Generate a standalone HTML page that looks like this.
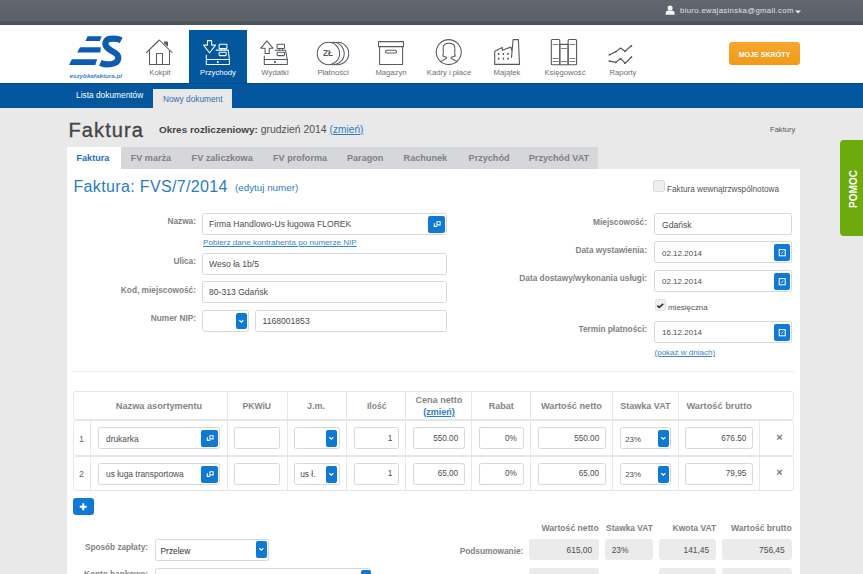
<!DOCTYPE html>
<html><head><meta charset="utf-8">
<style>
*{margin:0;padding:0;box-sizing:border-box}
html,body{width:863px;height:574px;overflow:hidden}
body{position:relative;background:#e9e9e9;font-family:"Liberation Sans",sans-serif;color:#555}
.a{position:absolute;white-space:nowrap}
#top{left:0;top:0;width:863px;height:25px;background:linear-gradient(#60676e 0%,#5a6168 82%,#4d545a 84%,#4b5258 100%)}
#hdr{left:0;top:25px;width:863px;height:58px;background:#fff}
#blue{left:0;top:83px;width:863px;height:25px;background:#02579f;border-top:1px solid #004c92}
.nt{font-size:7.7px;color:#707070;line-height:10px;text-align:center}
.lbl{font-size:8.3px;font-weight:bold;color:#828282;line-height:10px;text-align:right}
.inp{background:#fff;border:1px solid #d6d8db;border-radius:2.5px;height:22px}
.val{font-size:8.6px;color:#4d4d4d;line-height:10px}
.btn{position:absolute;background:#0e7ad4;border-radius:2px}
.th{font-size:9.2px;font-weight:bold;color:#858585;line-height:10px}
.row{border:1px solid #e6e6e6;border-radius:3px}
.vl{width:1px;background:#e8e8e8}
.sbox{background:#ebebeb;border-radius:3px;height:21px}
</style></head><body>
<div class="a" id="top"></div>
<div class="a" id="hdr"></div>
<div class="a" id="blue"></div>
<!-- top bar -->
<svg class="a" style="left:665px;top:4px" width="11" height="12" viewBox="665 4 11 12"><circle cx="670.1" cy="8.1" r="2.5" fill="#f4f4f4"/><path d="M665.7 14.8 V12.8 C665.7 11 667 10.4 670.1 10.4 C673.2 10.4 674.6 11 674.6 12.8 V14.8 Z" fill="#f4f4f4"/></svg>
<div class="a" style="left:680px;top:6px;font-size:7.7px;letter-spacing:0.36px;line-height:10px;color:#e2e2e2">biuro.ewajasinska@gmail.com</div>
<svg class="a" style="left:795px;top:10px" width="6" height="4" viewBox="0 0 6 4"><path d="M0 0.5H6L3 3.5Z" fill="#eee"/></svg>

<!-- logo -->
<svg class="a" style="left:65px;top:30px" width="62" height="52" viewBox="65 30 62 52">
<path d="M87.6 36.3 L101.7 36.3 L99.9 41 L85.4 41 Z" fill="#0c5daf"/>
<path d="M80 47.2 L100.8 47.2 L100.3 52.6 L77.2 52.6 Z" fill="#0c5daf"/>
<path d="M71.8 59.2 L97.2 59.2 L95.3 64.9 L69 64.9 Z" fill="#0c5daf"/>
<path d="M121.2 40.2 C118 38.6 113.5 38.4 110 38.9 C105.5 39.6 104.5 43.5 106.3 46.5 C108.3 49.6 113.5 51.5 116.3 53.8 C119.3 56.5 118.8 61.3 114.8 63 C110.5 64.8 104.5 64.6 100.3 62.8" fill="none" stroke="#0c5daf" stroke-width="6.2"/>
<text x="69.5" y="78" font-family="Liberation Sans" font-weight="bold" font-style="italic" font-size="5.8" fill="#3b82cc" textLength="52.5" lengthAdjust="spacingAndGlyphs">eszybkafaktura.pl</text>
</svg>

<!-- active tab -->
<div class="a" style="left:189px;top:30px;width:58px;height:53px;background:#02579f"></div>

<!-- nav icons -->
<svg class="a" style="left:0;top:25px" width="700" height="57" viewBox="0 25 700 57" fill="none" stroke-linecap="round" stroke-linejoin="round">
 <!-- house -->
 <g stroke="#585d64" stroke-width="1.05">
  <path d="M146.5 52.5 L159.3 40 L172 52.5"/>
  <path d="M149.5 50.5 V64.5 H169.5 V50.5"/>
  <path d="M156.5 64.5 V53.5 H162.5 V64.5"/>
  <path d="M164.5 42 H167.5 V45.8 L164.5 43.2 Z" fill="#585d64"/>
 </g>
 <!-- przychody (white) -->
 <g stroke="#fff" stroke-width="1.05">
  <path d="M207.5 40.6 H211.6 V45.1 H215.6 L209.5 52.8 L203.5 45.1 H207.5 Z"/>
  <rect x="219.1" y="44.3" width="7.8" height="4.3" rx="0.5"/>
  <path d="M221.3 48.6 V50 M224.7 48.6 V50" stroke-width="0.8"/>
  <path d="M216.2 50.1 H228.2 L229.4 59.5"/>
  <rect x="219.1" y="52.2" width="7.1" height="3.4" rx="0.8"/>
  <path d="M206.3 55.3 V64.5 H229.4 V59.5 H206.3"/>
  <circle cx="217.8" cy="62.1" r="0.5" fill="#fff"/>
 </g>
 <!-- wydatki -->
 <g stroke="#555a60" stroke-width="1.05">
  <path d="M265.1 53.5 V48.2 H260.9 L266.9 40.9 L273 48.2 H269.3 V53.5 Z"/>
  <rect x="277.1" y="44.3" width="7.4" height="4.2" rx="0.5"/>
  <path d="M279.3 48.5 V50 M282.6 48.5 V50" stroke-width="0.8"/>
  <path d="M275.3 50.3 H285.5 L287.3 59.5"/>
  <rect x="277.1" y="52.2" width="7.4" height="3.4" rx="0.8"/>
  <path d="M264.3 56.1 V64.5 H287.3 V59.5 H264.3"/>
  <circle cx="275" cy="62.1" r="0.5" fill="#555a60"/>
 </g>
 <!-- platnosci -->
 <g stroke="#585d64" stroke-width="1.05" fill="#fff">
  <circle cx="337.55" cy="53.45" r="11.2"/>
  <circle cx="333" cy="53.45" r="11.2"/>
  <circle cx="328.4" cy="53.45" r="11.2"/>
 </g>
 <!-- magazyn -->
 <g stroke="#585d64" stroke-width="1.05">
  <rect x="378.5" y="41.6" width="25" height="5"/>
  <path d="M379.6 46.6 V64.4 H402.6 V46.6"/>
  <rect x="385.5" y="50.2" width="11" height="2.8" rx="1.4"/>
 </g>
 <!-- kadry -->
 <g stroke="#585d64" stroke-width="1.05">
  <circle cx="448.75" cy="52.1" r="12.5"/>
  <path d="M440.4 61.6 L446.6 58.2 L446.4 57.2 L442.6 56 L443.2 54.5 V47.8 C443.2 44.6 445.2 43.3 449 43.3 C452.8 43.3 454.8 44.6 454.8 47.8 V54.5 L455.4 56 L451.3 57.2 L451.1 58.2 L457.2 61.6"/>
 </g>
 <!-- majatek -->
 <g stroke="#555a60" stroke-width="1.1">
  <path d="M494.7 64.4 V51.3 L502.3 47.4 V50.2 L510.9 47.1 L511.6 50 M511.5 57.5 L513.1 39.6 H518.4 L519.5 64.4 H494.7"/>
  <g fill="#555a60" stroke="none"><rect x="497.85" y="53" width="1.5" height="2"/><rect x="502.65" y="53" width="1.5" height="2"/><rect x="507.25" y="53" width="1.5" height="2"/><rect x="497.85" y="57.6" width="1.5" height="2"/><rect x="502.65" y="57.6" width="1.5" height="2"/><rect x="507.25" y="57.6" width="1.5" height="2"/></g>
 </g>
 <!-- ksiegowosc -->
 <g stroke="#555a60" stroke-width="1.1">
  <rect x="551.3" y="39.5" width="8.5" height="25.3" rx="1"/>
  <rect x="559.8" y="44.4" width="8.3" height="20.4"/>
  <rect x="568.1" y="39.5" width="8.5" height="25.3" rx="1"/>
  <path d="M553 44.5 H558.3 M553 58.5 H558.3 M553 61.5 H558.3 M561.5 48.5 H566.5 M561.5 61.5 H566.5 M569.8 44.5 H575 M569.8 58.5 H575 M569.8 61.5 H575" stroke-width="0.9" stroke-opacity="0.85"/>
 </g>
 <!-- raporty -->
 <g stroke="#555a60" stroke-width="1.2">
  <path d="M609.5 54.7 L616 51.6 L620.5 48 L625 51.3 L631.4 45.8"/>
  <path d="M609.5 61.2 L615.8 62.4 L620.6 58.4 L625 63.2 L631.4 57.2"/><circle cx="609.5" cy="54.7" r="0.9" fill="#555a60" stroke="none"/><circle cx="616" cy="51.6" r="0.9" fill="#555a60" stroke="none"/><circle cx="625" cy="51.3" r="0.9" fill="#555a60" stroke="none"/><circle cx="631.4" cy="45.8" r="0.9" fill="#555a60" stroke="none"/><circle cx="609.5" cy="61.2" r="0.9" fill="#555a60" stroke="none"/><circle cx="615.8" cy="62.4" r="0.9" fill="#555a60" stroke="none"/><circle cx="625" cy="63.2" r="0.9" fill="#555a60" stroke="none"/><circle cx="631.4" cy="57.2" r="0.9" fill="#555a60" stroke="none"/>
 </g>
</svg>
<div class="a" style="left:319.5px;top:50px;font-size:8.2px;font-weight:bold;color:#555a60;width:17px;text-align:center;line-height:8px">ZŁ</div>

<div class="a nt" style="left:140px;top:68px;width:40px">Kokpit</div>
<div class="a nt" style="left:188px;top:68px;width:60px;color:#fff">Przychody</div>
<div class="a nt" style="left:245px;top:68px;width:60px">Wydatki</div>
<div class="a nt" style="left:303px;top:68px;width:60px">Płatności</div>
<div class="a nt" style="left:361px;top:68px;width:60px">Magazyn</div>
<div class="a nt" style="left:419px;top:68px;width:60px">Kadry i płace</div>
<div class="a nt" style="left:477px;top:68px;width:60px">Majątek</div>
<div class="a nt" style="left:535px;top:68px;width:60px">Księgowość</div>
<div class="a nt" style="left:593px;top:68px;width:60px">Raporty</div>

<!-- moje skroty -->
<div class="a" style="left:729px;top:42px;width:71px;height:23px;border-radius:3px;background:linear-gradient(#f5a631,#f39a17);color:#fff;font-size:7.1px;font-weight:bold;line-height:26px;text-align:center">MOJE SKRÓTY</div>

<!-- blue bar -->
<div class="a" style="left:76px;top:90px;font-size:8.36px;line-height:10px;color:#fff">Lista dokumentów</div>
<div class="a" style="left:153px;top:89px;width:79px;height:19px;background:#e9e9e9"></div>
<div class="a" style="left:163px;top:93.5px;font-size:8.3px;line-height:10px;color:#2f6db3">Nowy dokument</div>

<!-- title row -->
<div class="a" style="left:68.5px;top:117px;font-size:20px;letter-spacing:1.1px;line-height:26px;color:#454545;-webkit-text-stroke:0.35px #454545">Faktura</div>
<div class="a" style="left:159px;top:125px;font-size:10.4px;line-height:10px;color:#505050"><b style="font-size:9.95px;color:#444">Okres rozliczeniowy:</b> grudzień 2014 <span style="color:#2d7cc5;text-decoration:underline;font-size:10.2px">(zmień)</span></div>
<div class="a" style="left:770px;top:125px;font-size:7.6px;line-height:10px;color:#555">Faktury</div>

<!-- POMOC -->
<div class="a" style="left:840px;top:140px;width:30px;height:96px;border-radius:4px;background:#6cab0b"></div>
<div class="a" style="left:806px;top:183px;width:96px;height:12px;transform:rotate(-90deg);color:#fff;font-size:10px;font-weight:bold;line-height:12px;text-align:center">POMOC</div>

<!-- tabs -->
<div class="a" style="left:67px;top:147px;width:531px;height:22px;background:#d5d7da"></div>
<div class="a" style="left:67px;top:147px;width:54px;height:22px;background:#fff"></div>
<div class="a" style="left:76.5px;top:153px;font-size:9.1px;font-weight:bold;line-height:10px;color:#1d6cbd">Faktura</div>
<div class="a" style="left:130.7px;top:153px;font-size:9.1px;font-weight:bold;line-height:10px;color:#808080">FV marża</div>
<div class="a" style="left:191.6px;top:153px;font-size:9.1px;font-weight:bold;line-height:10px;color:#808080">FV zaliczkowa</div>
<div class="a" style="left:273px;top:153px;font-size:9.1px;font-weight:bold;line-height:10px;color:#808080">FV proforma</div>
<div class="a" style="left:347px;top:153px;font-size:9.1px;font-weight:bold;line-height:10px;color:#808080">Paragon</div>
<div class="a" style="left:403.6px;top:153px;font-size:9.1px;font-weight:bold;line-height:10px;color:#808080">Rachunek</div>
<div class="a" style="left:468.6px;top:153px;font-size:9.1px;font-weight:bold;line-height:10px;color:#808080">Przychód</div>
<div class="a" style="left:528.8px;top:153px;font-size:9.1px;font-weight:bold;line-height:10px;color:#808080">Przychód VAT</div>

<!-- panel -->
<div class="a" style="left:67px;top:169px;width:733px;height:405px;background:#fff"></div>

<div class="a" style="left:73.5px;top:176.5px;font-size:16px;letter-spacing:0.35px;line-height:20px;color:#2c7cc4">Faktura: FVS/7/2014</div>
<div class="a" style="left:235px;top:182.5px;font-size:9.8px;line-height:10px;color:#2c7cc4">(edytuj numer)</div>

<!-- checkbox wewnatrz -->
<div class="a" style="left:653px;top:180px;width:12px;height:12px;border:1px solid #dcdcdc;border-radius:2px;background:#eee"></div>
<div class="a" style="left:667px;top:184.5px;font-size:8.2px;line-height:10px;color:#555">Faktura wewnątrzwspólnotowa</div>

<!-- left form -->
<div class="a lbl" style="left:100px;top:216px;width:96px">Nazwa:</div>
<div class="a inp" style="left:202px;top:213px;width:245px"></div>
<div class="a val" style="left:209px;top:219px">Firma Handlowo-Us ługowa FLOREK</div>
<div class="a btn" style="left:428px;top:216px;width:17px;height:17px"><svg width="17" height="17" style="position:absolute;left:0;top:0"><path d="M9 5.8H12.1V8.9H9Z" fill="#0d4f8a" stroke="#fff" stroke-width="1.1"/><path d="M6.3 7.2V10.4H9.2" fill="none" stroke="#fff" stroke-width="1.1"/></svg></div>
<div class="a" style="left:203px;top:238px;font-size:8.12px;line-height:10px;color:#3a85cc;text-decoration:underline">Pobierz dane kontrahenta po numerze NIP</div>

<div class="a lbl" style="left:100px;top:256px;width:96px">Ulica:</div>
<div class="a inp" style="left:202px;top:253px;width:245px"></div>
<div class="a val" style="left:209px;top:259px">Weso ła 1b/5</div>

<div class="a lbl" style="left:60px;top:284.5px;width:136px">Kod, miejscowość:</div>
<div class="a inp" style="left:202px;top:281px;width:245px"></div>
<div class="a val" style="left:209px;top:287px">80-313 Gdańsk</div>

<div class="a lbl" style="left:100px;top:313px;width:96px">Numer NIP:</div>
<div class="a inp" style="left:202px;top:310px;width:47px"></div>
<div class="a btn" style="left:236px;top:312.5px;width:11px;height:16px"><svg width="11" height="16" style="position:absolute;left:0;top:0"><path d="M3.3 7.3L5.3 9.2L7.3 7.3" fill="none" stroke="#fff" stroke-width="1.2"/></svg></div>
<div class="a inp" style="left:255px;top:310px;width:192px"></div>
<div class="a val" style="left:262.5px;top:316px">1168001853</div>

<!-- right form -->
<div class="a lbl" style="left:500px;top:217px;width:147px">Miejscowość:</div>
<div class="a inp" style="left:654px;top:213px;width:138px"></div>
<div class="a val" style="left:662px;top:220px">Gdańsk</div>

<div class="a lbl" style="left:500px;top:244.5px;width:147px">Data wystawienia:</div>
<div class="a inp" style="left:654px;top:241px;width:138px"></div>
<div class="a val" style="left:662px;top:249.2px;font-size:8px">02.12.2014</div>
<div class="a btn" style="left:774px;top:244px;width:16px;height:17px"><svg width="16" height="17" style="position:absolute;left:0;top:0"><rect x="5.2" y="5.6" width="6" height="6.2" fill="none" stroke="#fff" stroke-width="1"/><path d="M7.3 9.8L9.3 7.6" stroke="#fff" stroke-width="0.8"/></svg></div>

<div class="a lbl" style="left:500px;top:273px;width:147px">Data dostawy/wykonania usługi:</div>
<div class="a inp" style="left:654px;top:270px;width:138px"></div>
<div class="a val" style="left:662px;top:277.2px;font-size:8px">02.12.2014</div>
<div class="a btn" style="left:774px;top:272.5px;width:16px;height:17px"><svg width="16" height="17" style="position:absolute;left:0;top:0"><rect x="5.2" y="5.6" width="6" height="6.2" fill="none" stroke="#fff" stroke-width="1"/><path d="M7.3 9.8L9.3 7.6" stroke="#fff" stroke-width="0.8"/></svg></div>

<div class="a" style="left:654.5px;top:299px;width:11px;height:11.5px;border:1px solid #e3e3e3;border-radius:2px;background:#f0f0f0"></div>
<svg class="a" style="left:654px;top:299px" width="12" height="12"><path d="M3.3 6.6L5.2 8.4L9.2 4.8" fill="none" stroke="#333" stroke-width="1.7"/></svg>
<div class="a" style="left:668px;top:302.5px;font-size:7.94px;line-height:10px;color:#555">miesięczna</div>

<div class="a lbl" style="left:500px;top:323.5px;width:147px">Termin płatności:</div>
<div class="a inp" style="left:654px;top:321px;width:138px"></div>
<div class="a val" style="left:662px;top:328.2px;font-size:8px">16.12.2014</div>
<div class="a btn" style="left:774px;top:323.5px;width:16px;height:17px"><svg width="16" height="17" style="position:absolute;left:0;top:0"><rect x="5.2" y="5.6" width="6" height="6.2" fill="none" stroke="#fff" stroke-width="1"/><path d="M7.3 9.8L9.3 7.6" stroke="#fff" stroke-width="0.8"/></svg></div>
<div class="a" style="left:654.5px;top:348px;font-size:8.03px;line-height:10px;color:#3a85cc;text-decoration:underline">(pokaż w dniach)</div>

<div class="a" style="left:73px;top:371px;width:721px;height:1px;background:#ececec"></div>

<div class="a row" style="left:73px;top:391px;width:721px;height:29px"></div>
<div class="a vl" style="left:227px;top:392px;height:27px"></div>
<div class="a vl" style="left:287px;top:392px;height:27px"></div>
<div class="a vl" style="left:346px;top:392px;height:27px"></div>
<div class="a vl" style="left:405px;top:392px;height:27px"></div>
<div class="a vl" style="left:471px;top:392px;height:27px"></div>
<div class="a vl" style="left:530px;top:392px;height:27px"></div>
<div class="a vl" style="left:612px;top:392px;height:27px"></div>
<div class="a vl" style="left:678px;top:392px;height:27px"></div>
<div class="a row" style="left:73px;top:420px;width:721px;height:36px"></div>
<div class="a vl" style="left:90px;top:421px;height:34px"></div>
<div class="a vl" style="left:227px;top:421px;height:34px"></div>
<div class="a vl" style="left:287px;top:421px;height:34px"></div>
<div class="a vl" style="left:346px;top:421px;height:34px"></div>
<div class="a vl" style="left:405px;top:421px;height:34px"></div>
<div class="a vl" style="left:471px;top:421px;height:34px"></div>
<div class="a vl" style="left:530px;top:421px;height:34px"></div>
<div class="a vl" style="left:612px;top:421px;height:34px"></div>
<div class="a vl" style="left:678px;top:421px;height:34px"></div>
<div class="a vl" style="left:759px;top:421px;height:34px"></div>
<div class="a row" style="left:73px;top:456px;width:721px;height:35px"></div>
<div class="a vl" style="left:90px;top:457px;height:33px"></div>
<div class="a vl" style="left:227px;top:457px;height:33px"></div>
<div class="a vl" style="left:287px;top:457px;height:33px"></div>
<div class="a vl" style="left:346px;top:457px;height:33px"></div>
<div class="a vl" style="left:405px;top:457px;height:33px"></div>
<div class="a vl" style="left:471px;top:457px;height:33px"></div>
<div class="a vl" style="left:530px;top:457px;height:33px"></div>
<div class="a vl" style="left:612px;top:457px;height:33px"></div>
<div class="a vl" style="left:678px;top:457px;height:33px"></div>
<div class="a vl" style="left:759px;top:457px;height:33px"></div>
<div class="a th" style="left:109px;top:400.5px;width:100px;text-align:center;font-size:9.2px">Nazwa asortymentu</div>
<div class="a th" style="left:206.8px;top:400.5px;width:100px;text-align:center;font-size:8.6px">PKWiU</div>
<div class="a th" style="left:266px;top:400.5px;width:100px;text-align:center;font-size:9px">J.m.</div>
<div class="a th" style="left:326.7px;top:400.5px;width:100px;text-align:center;font-size:8.5px">Ilość</div>
<div class="a th" style="left:388.9px;top:395px;width:100px;text-align:center;font-size:9.1px">Cena netto</div>
<div class="a" style="left:388.9px;top:406.5px;width:100px;text-align:center;font-size:9px;font-weight:bold;line-height:10px;color:#2d7cc5;text-decoration:underline">(zmień)</div>
<div class="a th" style="left:451.2px;top:400.5px;width:100px;text-align:center;font-size:9px">Rabat</div>
<div class="a th" style="left:521.5px;top:400.5px;width:100px;text-align:center;font-size:9.2px">Wartość netto</div>
<div class="a th" style="left:595.4px;top:400.5px;width:100px;text-align:center;font-size:9px">Stawka VAT</div>
<div class="a th" style="left:669.2px;top:400.5px;width:100px;text-align:center;font-size:9.27px">Wartość brutto</div>
<div class="a" style="left:79px;top:434.2px;width:5px;font-size:8.8px;line-height:10px;color:#666">1</div>
<div class="a inp" style="left:98px;top:427px;width:122px"></div>
<div class="a val" style="left:106px;top:434.2px;font-size:8.4px">drukarka</div>
<div class="a btn" style="left:201px;top:430px;width:17px;height:17px"><svg width="17" height="17" style="position:absolute;left:0;top:0"><path d="M9 5.8H12.1V8.9H9Z" fill="#0d4f8a" stroke="#fff" stroke-width="1.1"/><path d="M6.3 7.2V10.4H9.2" fill="none" stroke="#fff" stroke-width="1.1"/></svg></div>
<div class="a inp" style="left:234px;top:427px;width:46px"></div>
<div class="a inp" style="left:293.7px;top:427px;width:45.900000000000034px"></div>
<div class="a btn" style="left:326.4px;top:430px;width:10.5px;height:16.5px"><svg width="11" height="16" style="position:absolute;left:0;top:0"><path d="M3.3 7.3L5.3 9.2L7.3 7.3" fill="none" stroke="#fff" stroke-width="1.2"/></svg></div>
<div class="a inp" style="left:354.4px;top:427px;width:44.30000000000001px"></div>
<div class="a val" style="left:354.4px;top:434.2px;width:37.80000000000001px;text-align:right;font-size:8.2px">1</div>
<div class="a inp" style="left:413.3px;top:427px;width:51.39999999999998px"></div>
<div class="a val" style="left:413.3px;top:434.2px;width:44.89999999999998px;text-align:right;font-size:8.2px">550.00</div>
<div class="a inp" style="left:479.3px;top:427px;width:44.599999999999966px"></div>
<div class="a val" style="left:479.3px;top:434.2px;width:37.599999999999966px;text-align:right;font-size:8.2px">0%</div>
<div class="a inp" style="left:538.2px;top:427px;width:67.5px"></div>
<div class="a val" style="left:538.2px;top:434.2px;width:61.0px;text-align:right;font-size:8.2px">550.00</div>
<div class="a inp" style="left:620.2px;top:427px;width:50.799999999999955px"></div>
<div class="a val" style="left:625.2px;top:434.7px;font-size:7.9px">23%</div>
<div class="a btn" style="left:658.4px;top:430px;width:10.5px;height:16.5px"><svg width="11" height="16" style="position:absolute;left:0;top:0"><path d="M3.3 7.3L5.3 9.2L7.3 7.3" fill="none" stroke="#fff" stroke-width="1.2"/></svg></div>
<div class="a inp" style="left:685.2px;top:427px;width:67.59999999999991px"></div>
<div class="a val" style="left:685.2px;top:434.2px;width:61.09999999999991px;text-align:right;font-size:8.2px">676.50</div>
<div class="a" style="left:774px;top:431.9px;width:11px;text-align:center;font-size:11px;font-weight:bold;line-height:10px;color:#777">×</div>
<div class="a" style="left:79px;top:469.4px;width:5px;font-size:8.8px;line-height:10px;color:#666">2</div>
<div class="a inp" style="left:98px;top:463px;width:122px"></div>
<div class="a val" style="left:106px;top:469.4px;font-size:8.4px">us ługa transportowa</div>
<div class="a btn" style="left:201px;top:466px;width:17px;height:17px"><svg width="17" height="17" style="position:absolute;left:0;top:0"><path d="M9 5.8H12.1V8.9H9Z" fill="#0d4f8a" stroke="#fff" stroke-width="1.1"/><path d="M6.3 7.2V10.4H9.2" fill="none" stroke="#fff" stroke-width="1.1"/></svg></div>
<div class="a inp" style="left:234px;top:463px;width:46px"></div>
<div class="a inp" style="left:293.7px;top:463px;width:45.900000000000034px"></div>
<div class="a val" style="left:300.2px;top:469.4px;font-size:8.4px">us ł.</div>
<div class="a btn" style="left:326.4px;top:466px;width:10.5px;height:16.5px"><svg width="11" height="16" style="position:absolute;left:0;top:0"><path d="M3.3 7.3L5.3 9.2L7.3 7.3" fill="none" stroke="#fff" stroke-width="1.2"/></svg></div>
<div class="a inp" style="left:354.4px;top:463px;width:44.30000000000001px"></div>
<div class="a val" style="left:354.4px;top:469.4px;width:37.80000000000001px;text-align:right;font-size:8.2px">1</div>
<div class="a inp" style="left:413.3px;top:463px;width:51.39999999999998px"></div>
<div class="a val" style="left:413.3px;top:469.4px;width:44.89999999999998px;text-align:right;font-size:8.2px">65,00</div>
<div class="a inp" style="left:479.3px;top:463px;width:44.599999999999966px"></div>
<div class="a val" style="left:479.3px;top:469.4px;width:37.599999999999966px;text-align:right;font-size:8.2px">0%</div>
<div class="a inp" style="left:538.2px;top:463px;width:67.5px"></div>
<div class="a val" style="left:538.2px;top:469.4px;width:61.0px;text-align:right;font-size:8.2px">65,00</div>
<div class="a inp" style="left:620.2px;top:463px;width:50.799999999999955px"></div>
<div class="a val" style="left:625.2px;top:469.9px;font-size:7.9px">23%</div>
<div class="a btn" style="left:658.4px;top:466px;width:10.5px;height:16.5px"><svg width="11" height="16" style="position:absolute;left:0;top:0"><path d="M3.3 7.3L5.3 9.2L7.3 7.3" fill="none" stroke="#fff" stroke-width="1.2"/></svg></div>
<div class="a inp" style="left:685.2px;top:463px;width:67.59999999999991px"></div>
<div class="a val" style="left:685.2px;top:469.4px;width:61.09999999999991px;text-align:right;font-size:8.2px">79,95</div>
<div class="a" style="left:774px;top:467.1px;width:11px;text-align:center;font-size:11px;font-weight:bold;line-height:10px;color:#777">×</div>
<div class="a btn" style="left:73px;top:497.5px;width:20.5px;height:17.3px;border-radius:3px"></div>
<svg class="a" style="left:73px;top:497.5px" width="21" height="18"><path d="M10.25 5.3V12.2M6.8 8.75H13.7" stroke="#fff" stroke-width="2"/></svg>

<!-- bottom -->
<div class="a lbl" style="left:60px;top:542.5px;width:88px;font-size:8.22px">Sposób zapłaty:</div>
<div class="a inp" style="left:155px;top:539px;width:114px"></div>
<div class="a val" style="left:160.5px;top:545.5px;font-size:8.4px;color:#333">Przelew</div>
<div class="a btn" style="left:256.2px;top:541.2px;width:10.4px;height:16.6px"><svg width="11" height="16" style="position:absolute;left:0;top:0"><path d="M3.3 7.3L5.3 9.2L7.3 7.3" fill="none" stroke="#fff" stroke-width="1.2"/></svg></div>
<div class="a lbl" style="left:60px;top:569.5px;width:88px;font-size:8.22px">Konto bankowe:</div>
<div class="a inp" style="left:155px;top:567.5px;width:216px"></div>
<div class="a btn" style="left:360.5px;top:569.5px;width:10.4px;height:16.6px"><svg width="11" height="16" style="position:absolute;left:0;top:0"><path d="M3.3 7.3L5.3 9.2L7.3 7.3" fill="none" stroke="#fff" stroke-width="1.2"/></svg></div>

<div class="a lbl" style="left:440px;top:522.5px;width:158.7px;font-size:8.64px">Wartość netto</div>
<div class="a lbl" style="left:560px;top:522.5px;width:92.8px;font-size:8.39px">Stawka VAT</div>
<div class="a lbl" style="left:620px;top:522.5px;width:96.2px;font-size:8.5px">Kwota VAT</div>
<div class="a lbl" style="left:700px;top:522.5px;width:91.7px;font-size:8.61px">Wartość brutto</div>
<div class="a lbl" style="left:420px;top:546px;width:103.4px;font-size:8.32px">Podsumowanie:</div>
<div class="a sbox" style="left:529px;top:539px;width:70px"></div>
<div class="a sbox" style="left:605px;top:539px;width:48px"></div>
<div class="a sbox" style="left:659px;top:539px;width:57px"></div>
<div class="a sbox" style="left:722px;top:539px;width:70px"></div>
<div class="a sbox" style="left:529px;top:568px;width:70px"></div>
<div class="a sbox" style="left:659px;top:568px;width:57px"></div>
<div class="a sbox" style="left:722px;top:568px;width:70px"></div>
<div class="a val" style="left:529px;top:544.5px;width:63.2px;text-align:right;font-size:8.4px">615,00</div>
<div class="a val" style="left:611.7px;top:544.5px;font-size:8.4px">23%</div>
<div class="a val" style="left:659px;top:544.5px;width:50.1px;text-align:right;font-size:8.4px">141,45</div>
<div class="a val" style="left:722px;top:544.5px;width:62.7px;text-align:right;font-size:8.4px">756,45</div>

</body></html>
